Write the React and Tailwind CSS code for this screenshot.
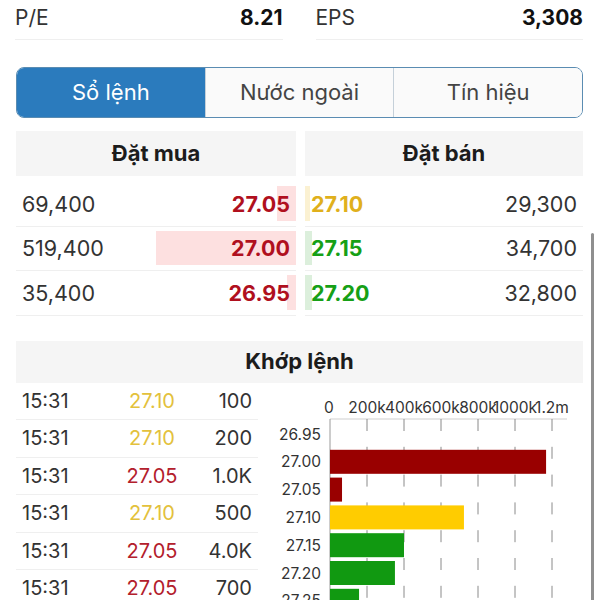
const bids = [
  { vol: "69,400", price: "27.05", bar: 19 },
  { vol: "519,400", price: "27.00", bar: 140 },
  { vol: "35,400", price: "26.95", bar: 9 },
];

const asks = [
  { price: "27.10", vol: "29,300", bar: 5, color: "text-[#e0b01c]", bg: "bg-[#fbf1d2]" },
  { price: "27.15", vol: "34,700", bar: 7, color: "text-[#16a016]", bg: "bg-[#dcefdc]" },
  { price: "27.20", vol: "32,800", bar: 7, color: "text-[#16a016]", bg: "bg-[#dcefdc]" },
];

const trades = [
  { time: "15:31", price: "27.10", vol: "100", up: true },
  { time: "15:31", price: "27.10", vol: "200", up: true },
  { time: "15:31", price: "27.05", vol: "1.0K", up: false },
  { time: "15:31", price: "27.10", vol: "500", up: true },
  { time: "15:31", price: "27.05", vol: "4.0K", up: false },
  { time: "15:31", price: "27.05", vol: "700", up: false },
];

// volume by price, in thousands
const volumes = [
  { price: "26.95", v: 0, color: "#990000" },
  { price: "27.00", v: 1168, color: "#990000" },
  { price: "27.05", v: 65, color: "#990000" },
  { price: "27.10", v: 724, color: "#ffcc00" },
  { price: "27.15", v: 400, color: "#119911" },
  { price: "27.20", v: 351, color: "#119911" },
  { price: "27.25", v: 157, color: "#119911" },
];

const ticks = ["0", "200k", "400k", "600k", "800k", "1000k", "1.2m"];

function VolumeChart() {
  const x0 = 72;
  const step = 37;
  const rowStep = 27.8;
  const y0 = 51;
  return (
    <svg width="325" height="240" className="block">
      {ticks.map((t, i) => (
        <text
          key={t}
          x={x0 + i * step + (i === 0 ? -1 : 0)}
          y="30"
          textAnchor="middle"
          fontSize="15.5"
          fill="#333"
        >
          {t}
        </text>
      ))}
      <line x1={x0} y1="36" x2="309" y2="36" stroke="#cfcfcf" strokeWidth="1" />
      {ticks.slice(1).map((t, i) => (
        <line
          key={t}
          x1={x0 + (i + 1) * step}
          y1="36"
          x2={x0 + (i + 1) * step}
          y2="240"
          stroke="#8a8a8a"
          strokeWidth="1"
          strokeDasharray="12 15.8"
        />
      ))}
      <line x1={x0} y1="36" x2={x0} y2="240" stroke="#9a9a9a" strokeWidth="1" />
      {volumes.map((r, i) => {
        const cy = y0 + i * rowStep;
        return (
          <g key={r.price}>
            <text
              x="63"
              y={cy}
              textAnchor="end"
              dominantBaseline="central"
              fontSize="15.5"
              fill="#333"
            >
              {r.price}
            </text>
            {r.v > 0 && (
              <rect
                x={x0}
                y={cy - 12}
                width={(r.v / 1200) * (step * 6)}
                height="24"
                fill={r.color}
              />
            )}
          </g>
        );
      })}
    </svg>
  );
}

export default function App() {
  return (
    <div className="relative w-[600px] h-[600px] overflow-hidden bg-white font-['Inter',sans-serif] text-[#333]">
      {/* P/E & EPS */}
      <div className="flex gap-[33px] pl-[15px] pr-[17px]">
        <div className="flex-1 h-[40px] pb-[4px] flex items-center justify-between border-b border-[#efefef] text-[21px]">
          <span>P/E</span>
          <span className="font-bold text-[#111]">8.21</span>
        </div>
        <div className="flex-1 h-[40px] pb-[4px] flex items-center justify-between border-b border-[#efefef] text-[21px]">
          <span>EPS</span>
          <span className="font-bold text-[#111]">3,308</span>
        </div>
      </div>

      {/* Tabs */}
      <div className="mt-[27px] mx-[16px] w-[567px] h-[51px] flex rounded-[8px] border-[1.5px] border-[#5a8cb2] overflow-hidden text-[22px]">
        <div className="flex-1 flex items-center justify-center bg-[#2b7bbd] text-white">
          Sổ lệnh
        </div>
        <div className="flex-1 flex items-center justify-center bg-[#fafafa] text-[#444] border-l border-[#c5d0d9]">
          Nước ngoài
        </div>
        <div className="flex-1 flex items-center justify-center bg-[#fafafa] text-[#444] border-l border-[#c5d0d9]">
          Tín hiệu
        </div>
      </div>

      {/* Order book */}
      <div className="mt-[13px] ml-[16px] w-[567px] flex gap-[9px]">
        <div className="w-[280px]">
          <div className="h-[45px] flex items-center justify-center bg-[#f5f5f5] text-[22px] font-bold text-[#1c1c1c]">
            Đặt mua
          </div>
          <div className="mt-[6px]">
            {bids.map((b) => (
              <div
                key={b.price}
                className="relative h-[44.5px] flex items-center justify-between px-[6px] border-b border-[#efefef] text-[21.5px]"
              >
                <div
                  className="absolute right-0 top-[4px] bottom-[5px] bg-[#fde0e0]"
                  style={{ width: b.bar }}
                />
                <span className="relative">{b.vol}</span>
                <span className="relative font-bold text-[#b0101e]">{b.price}</span>
              </div>
            ))}
          </div>
        </div>
        <div className="w-[278px]">
          <div className="h-[45px] flex items-center justify-center bg-[#f5f5f5] text-[22px] font-bold text-[#1c1c1c]">
            Đặt bán
          </div>
          <div className="mt-[6px]">
            {asks.map((a) => (
              <div
                key={a.price}
                className="relative h-[44.5px] flex items-center justify-between px-[6px] border-b border-[#efefef] text-[21.5px]"
              >
                <div
                  className={`absolute left-0 top-[4px] bottom-[5px] ${a.bg}`}
                  style={{ width: a.bar }}
                />
                <span className={`relative font-bold ${a.color}`}>{a.price}</span>
                <span className="relative">{a.vol}</span>
              </div>
            ))}
          </div>
        </div>
      </div>

      {/* Matched orders */}
      <div className="mt-[25px] ml-[16px] w-[567px]">
        <div className="h-[42px] flex items-center justify-center bg-[#f5f5f5] text-[22px] font-bold text-[#1c1c1c]">
          Khớp lệnh
        </div>
        <div className="flex">
          <div className="w-[242px]">
            {trades.map((t, i) => (
              <div
                key={i}
                className="h-[37.5px] flex items-center px-[6px] border-b border-[#efefef] text-[20px]"
              >
                <span className="w-[88px]">{t.time}</span>
                <span
                  className={`flex-1 text-center ${
                    t.up ? "text-[#e3c13c]" : "text-[#b3202c]"
                  }`}
                >
                  {t.price}
                </span>
                <span className="w-[58px] text-right">{t.vol}</span>
              </div>
            ))}
          </div>
          <VolumeChart />
        </div>
      </div>

      {/* scroll indicator */}
      <div className="absolute right-[6px] top-[233px] w-[3px] h-[380px] rounded-full bg-[#8f8f8f]" />
    </div>
  );
}
